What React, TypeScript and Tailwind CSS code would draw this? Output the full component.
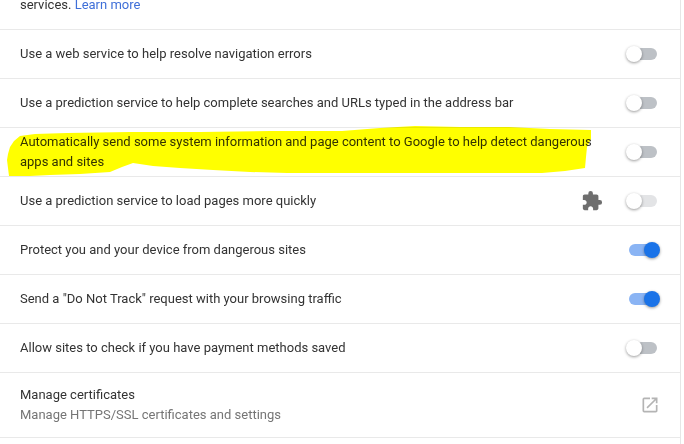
import { MdExtension, MdOpenInNew } from "react-icons/md"

const Toggle = ({ on, disabled }: { on?: boolean; disabled?: boolean }) => {
  return (
    <div
      className={
        "relative ml-auto h-3 w-7 shrink-0 rounded-full " +
        (on ? "bg-[#8ab4f4]" : disabled ? "bg-[#e3e4e6]" : "bg-[#bdc1c6]")
      }
    >
      <div
        className={
          "absolute top-[-2px] h-4 w-4 rounded-full shadow-[0_1px_3px_rgba(0,0,0,0.4)] " +
          (on ? "left-[15px] bg-[#1a73e8]" : "left-[-3px] bg-white")
        }
      ></div>
    </div>
  )
}

const Row = ({ label, on, disabled, puzzle }: { label: string; on?: boolean; disabled?: boolean; puzzle?: boolean }) => {
  return (
    <div className="flex h-[49px] items-center border-b border-[#e9e9e9] pl-5 pr-[23px]">
      <span className="min-w-0 max-w-[580px]">{label}</span>
      {puzzle && <MdExtension className="ml-auto mr-[26px] shrink-0 text-[#6e6e6e]" size={22} />}
      {puzzle ? (
        <div className="shrink-0">
          <Toggle disabled={disabled} on={on} />
        </div>
      ) : (
        <Toggle disabled={disabled} on={on} />
      )}
    </div>
  )
}

export default function App() {
  return (
    <div className="h-[444px] w-[684px] overflow-hidden bg-white font-['Roboto',sans-serif] text-[13px] leading-5 text-[#333333]">
      <div className="relative h-[444px] w-[681px] border-r border-[#e6e6e6]">
        {/* Top row, cut off by the screenshot */}
        <div className="h-[30px] border-b border-[#e9e9e9] pl-5 leading-[10px]">
          services. <span className="text-[#3f6fd8]">Learn more</span>
        </div>
        <Row label="Use a web service to help resolve navigation errors" />
        <Row label="Use a prediction service to help complete searches and URLs typed in the address bar" />
        <Row label="Automatically send some system information and page content to Google to help detect dangerous apps and sites" />
        <Row disabled label="Use a prediction service to load pages more quickly" puzzle />
        <Row label="Protect you and your device from dangerous sites" on />
        <Row label={'Send a "Do Not Track" request with your browsing traffic'} on />
        <Row label="Allow sites to check if you have payment methods saved" />
        <div className="flex h-[65px] items-center border-b border-[#e9e9e9] pl-5 pr-5">
          <div>
            <div>Manage certificates</div>
            <div className="text-[#757575]">Manage HTTPS/SSL certificates and settings</div>
          </div>
          <MdOpenInNew className="ml-auto shrink-0 text-[#b4b4b4]" size={20} />
        </div>

        {/* Yellow marker scribble on top of the page */}
        <svg className="absolute left-0 top-0 mix-blend-multiply" height="444" viewBox="0 0 684 444" width="684">
          <path
            d="M20 136 L14 141 L10 147 L8 154 L7 160 L8 168 L9 176 L30 176 L50 175 L80 174 L110 172 L122 167 L133 163 L153 166 L180 168 L213 170 L250 172 L287 173 L342 173 L375 173 L460 173 L542 173 L565 171 L585 168 L586 157 L587 147 L591 139 L591 130 L550 129 L509 127 L460 127 L415 126 L380 128 L342 131 L270 131 L200 132 L130 132 L67 133 L35 134 Z"
            fill="#ffff00"
          />
        </svg>
      </div>
    </div>
  )
}
